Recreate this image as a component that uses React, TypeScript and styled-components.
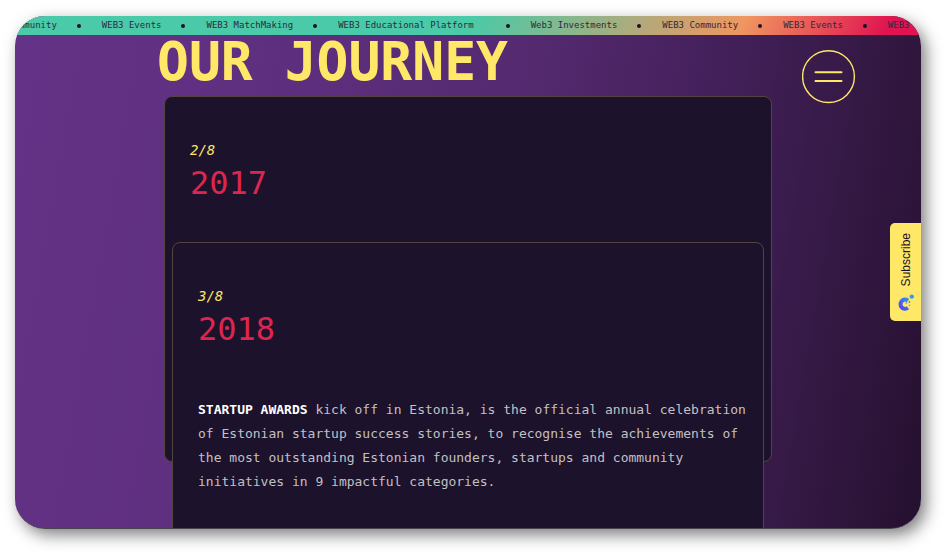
import React from "react";
import styled, { createGlobalStyle } from "styled-components";

const mono = `"DejaVu Sans Mono", "Liberation Mono", monospace`;

const GlobalStyle = createGlobalStyle`
  *, *::before, *::after { box-sizing: border-box; }
  body { margin: 0; background: #fff; font-family: ${mono}; }
`;

const Page = styled.div`
  height: 100vh;
  padding: 16px 27px 27px 15px;
  overflow: hidden;
`;

const Frame = styled.div`
  position: relative;
  display: flex;
  flex-direction: column;
  height: 100%;
  overflow: hidden;
  border-radius: 30px;
  border-bottom: 1px solid #4b444f;
  background: linear-gradient(100deg, #643286 0%, #5f2f80 25%, #552a70 52%, #43205a 72%, #331842 88%, #25102f 100%);
`;

const Shadow = styled.div`
  height: 100%;
  border-radius: 30px;
  box-shadow: 5px 6px 16px rgba(0, 0, 0, 0.5);
`;

const Ticker = styled.div`
  flex: none;
  overflow: hidden;
  background: linear-gradient(115deg, #4acaa8 0%, #4acaa8 50%, #f09660 80%, #df1450 96%);
`;

const Track = styled.ul`
  display: flex;
  gap: 21px;
  width: max-content;
  margin: 0 0 0 -34px;
  padding: 0;
  list-style: none;
`;

const TickerItem = styled.li<{ $wide?: boolean }>`
  display: flex;
  align-items: center;
  gap: ${(p) => (p.$wide ? 32 : 20)}px;
  font-size: 9px;
  line-height: 19px;
  white-space: nowrap;
  color: #2c2a3e;

  &::after {
    content: "";
    width: 4px;
    height: 4px;
    border-radius: 50%;
    background: #1c122b;
  }
`;

const Main = styled.main`
  width: 100%;
  max-width: 608px;
  margin: 0 auto;
`;

const Title = styled.h1`
  margin: 0 0 0 -7px;
  font-size: 53px;
  line-height: 54px;
  font-weight: 700;
  white-space: nowrap;
  color: #ffe867;
`;

const Stack = styled.div`
  display: grid;
  margin-top: 7px;
`;

const Card = styled.article<{ $depth: number }>`
  grid-area: 1 / 1;
  align-self: start;
  min-height: 366px;
  margin: ${(p) => p.$depth * 146}px ${(p) => p.$depth * 8}px 0;
  padding: 43px 14px 24px 25px;
  border: 1px solid #54443f;
  border-radius: 8px;
  background: #1c122b;
`;

const Counter = styled.p`
  margin: 0;
  font-size: 14px;
  line-height: 20px;
  font-style: italic;
  color: #ffe867;
`;

const Year = styled.h2`
  margin: 0 0 46px;
  font-size: 32px;
  line-height: 46px;
  font-weight: 400;
  color: #db264f;
`;

const Story = styled.p`
  margin: 0;
  font-size: 13px;
  line-height: 24px;
  color: #c3c0c4;

  strong { color: #fff; }
`;

const MenuButton = styled.button`
  position: absolute;
  top: 34px;
  right: 65px;
  display: grid;
  place-items: center;
  width: 54px;
  height: 54px;
  padding: 0;
  border: 0;
  background: none;
  color: #ffe867;
  cursor: pointer;
`;

const Subscribe = styled.button`
  position: absolute;
  top: 207px;
  right: 0;
  display: flex;
  flex-direction: column-reverse;
  align-items: center;
  justify-content: space-between;
  width: 31px;
  height: 98px;
  padding: 10px 0 9px;
  border: 0;
  border-radius: 5px 0 0 5px;
  background: #ffe867;
  color: #1c122b;
  font-family: "Liberation Sans", Arial, sans-serif;
  font-size: 12px;
  line-height: 16px;
  cursor: pointer;
`;

const Upright = styled.span`
  writing-mode: vertical-rl;
  transform: rotate(180deg);
`;

const topics = [
  "WEB3 Community",
  "WEB3 Events",
  "WEB3 MatchMaking",
  "WEB3 Educational Platform",
  "Web3 Investments",
  "WEB3 Community",
  "WEB3 Events",
  "WEB3 MatchMaking",
];

function MenuIcon() {
  return (
    <svg width="54" height="54" viewBox="0 0 54 54" fill="none" stroke="currentColor" aria-hidden="true">
      <circle cx="26.5" cy="26.6" r="25.9" strokeWidth="1.4" />
      <path d="M13.5 22.3h26M13.5 31h26" strokeWidth="2" strokeLinecap="round" />
    </svg>
  );
}

function BrandIcon() {
  return (
    <svg width="18" height="18" viewBox="0 0 18 18" aria-hidden="true">
      <defs>
        <linearGradient id="brand" x1="0" y1="1" x2="1" y2="0">
          <stop offset="0" stopColor="#5146ee" />
          <stop offset="1" stopColor="#3b8cf6" />
        </linearGradient>
      </defs>
      <path d="M11 6.6A4.6 4.6 0 1 0 11 13.8" fill="none" stroke="url(#brand)" strokeWidth="4" />
      <circle cx="14.8" cy="2.6" r="2.2" fill="#2f9cf5" />
      <circle cx="12.4" cy="8" r="0.9" fill="#4e86e8" />
      <circle cx="9.4" cy="9" r="0.9" fill="#7fa5c0" />
      <circle cx="12.6" cy="11.4" r="0.8" fill="#7fa5c0" />
    </svg>
  );
}

export default function App() {
  return (
    <Page>
      <GlobalStyle />
      <Shadow>
        <Frame>
          <Ticker>
            <Track>
              {topics.map((topic, i) => (
                <TickerItem key={i} $wide={topic.endsWith("Platform")}>
                  {topic}
                </TickerItem>
              ))}
            </Track>
          </Ticker>
          <Main>
            <Title>OUR JOURNEY</Title>
            <Stack>
              <Card $depth={0}>
                <Counter>2/8</Counter>
                <Year>2017</Year>
              </Card>
              <Card $depth={1}>
                <Counter>3/8</Counter>
                <Year>2018</Year>
                <Story>
                  <strong>STARTUP AWARDS</strong> kick off in Estonia, is the official annual celebration of
                  Estonian startup success stories, to recognise the achievements of the most outstanding
                  Estonian founders, startups and community initiatives in 9 impactful categories.
                </Story>
              </Card>
            </Stack>
          </Main>
          <MenuButton type="button" aria-label="Menu">
            <MenuIcon />
          </MenuButton>
          <Subscribe type="button">
            <BrandIcon />
            <Upright>Subscribe</Upright>
          </Subscribe>
        </Frame>
      </Shadow>
    </Page>
  );
}
